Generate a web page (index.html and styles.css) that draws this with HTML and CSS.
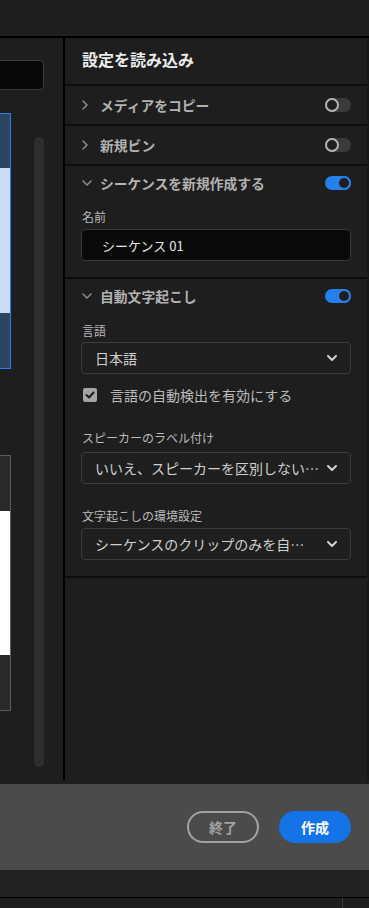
FILE: index.html
```html
<!DOCTYPE html>
<html lang="ja">
<head>
<meta charset="utf-8">
<title>設定を読み込み</title>
<link rel="stylesheet" href="styles.css">
</head>
<body>
<div class="app">
  <div class="topbar"></div>
  <div class="main">
    <div class="left">
      <div class="search"></div>
      <div class="lower">
        <div class="thumbs">
          <div class="thumb selected">
            <div class="band"></div>
            <div class="img"></div>
            <div class="band"></div>
          </div>
          <div class="thumb">
            <div class="band"></div>
            <div class="img"></div>
            <div class="band"></div>
          </div>
        </div>
        <div class="scroll"></div>
      </div>
    </div>
    <div class="divider"></div>
    <div class="panel">
      <div class="panel-head">設定を読み込み</div>

      <div class="row sep">
        <span class="chev"><svg width="6" height="10" viewBox="0 0 6 10"><path d="M1 1l4 4-4 4" fill="none" stroke="#8e8e8e" stroke-width="1.5" stroke-linecap="round" stroke-linejoin="round"/></svg></span>
        <span class="row-title">メディアをコピー</span>
        <span class="toggle"><span class="knob"></span></span>
      </div>

      <div class="row sep">
        <span class="chev"><svg width="6" height="10" viewBox="0 0 6 10"><path d="M1 1l4 4-4 4" fill="none" stroke="#8e8e8e" stroke-width="1.5" stroke-linecap="round" stroke-linejoin="round"/></svg></span>
        <span class="row-title">新規ビン</span>
        <span class="toggle"><span class="knob"></span></span>
      </div>

      <div class="section sep">
        <div class="row sec-head">
          <span class="chev"><svg width="10" height="6" viewBox="0 0 10 6"><path d="M1 1l4 4 4-4" fill="none" stroke="#8e8e8e" stroke-width="1.5" stroke-linecap="round" stroke-linejoin="round"/></svg></span>
          <span class="row-title">シーケンスを新規作成する</span>
          <span class="toggle on"><span class="knob"></span></span>
        </div>
        <div class="sec-body">
          <div class="label l-name">名前</div>
          <div class="textfield">シーケンス 01</div>
        </div>
      </div>

      <div class="section sep">
        <div class="row sec-head">
          <span class="chev"><svg width="10" height="6" viewBox="0 0 10 6"><path d="M1 1l4 4 4-4" fill="none" stroke="#8e8e8e" stroke-width="1.5" stroke-linecap="round" stroke-linejoin="round"/></svg></span>
          <span class="row-title">自動文字起こし</span>
          <span class="toggle on"><span class="knob"></span></span>
        </div>
        <div class="sec-body">
          <div class="label l-lang">言語</div>
          <div class="dropdown d-lang">
            <span class="dd-text">日本語</span>
            <svg class="dd-chev" width="10" height="6" viewBox="0 0 10 6"><path d="M1 1l4 4 4-4" fill="none" stroke="#d2d2d2" stroke-width="2" stroke-linecap="round" stroke-linejoin="round"/></svg>
          </div>
          <div class="check-row">
            <span class="checkbox"><svg width="10" height="8" viewBox="0 0 10 8"><path d="M1.5 4l2.5 2.5 4.5-5" fill="none" stroke="#1e1e1e" stroke-width="2" stroke-linecap="round" stroke-linejoin="round"/></svg></span>
            <span class="check-text">言語の自動検出を有効にする</span>
          </div>
          <div class="label l-spk">スピーカーのラベル付け</div>
          <div class="dropdown d-spk">
            <span class="dd-text">いいえ、スピーカーを区別しない…</span>
            <svg class="dd-chev" width="10" height="6" viewBox="0 0 10 6"><path d="M1 1l4 4 4-4" fill="none" stroke="#d2d2d2" stroke-width="2" stroke-linecap="round" stroke-linejoin="round"/></svg>
          </div>
          <div class="label l-pref">文字起こしの環境設定</div>
          <div class="dropdown d-pref">
            <span class="dd-text">シーケンスのクリップのみを自…</span>
            <svg class="dd-chev" width="10" height="6" viewBox="0 0 10 6"><path d="M1 1l4 4 4-4" fill="none" stroke="#d2d2d2" stroke-width="2" stroke-linecap="round" stroke-linejoin="round"/></svg>
          </div>
        </div>
      </div>
    </div>
  </div>
  <div class="gap"></div>
  <div class="footer">
    <button class="btn btn-cancel">終了</button>
    <button class="btn btn-create">作成</button>
  </div>
  <div class="statusbar">
    <div class="status-top"></div>
    <div class="status-bottom"><div class="status-tick"></div></div>
  </div>
</div>
</body>
</html>
```

FILE: styles.css
```css
* { box-sizing: border-box; }

html, body {
  margin: 0;
  padding: 0;
  background: #1e1e1e;
}

body {
  width: 369px;
  height: 908px;
  overflow: hidden;
  font-family: "Noto Sans CJK JP", "Noto Sans", sans-serif;
}

.app {
  display: flex;
  flex-direction: column;
  width: 369px;
  height: 908px;
}

.topbar {
  height: 38px;
  background: #1f1f1f;
  border-bottom: 2px solid #000;
  flex: none;
}

.main {
  display: flex;
  height: 742px;
  flex: none;
}

/* left column */
.left {
  width: 63px;
  flex: none;
  display: flex;
  flex-direction: column;
}

.search {
  margin-top: 22px;
  width: 44px;
  height: 30px;
  background: #080808;
  border: 1px solid #3a3a3a;
  border-left: none;
  border-radius: 0 4px 4px 0;
}

.lower {
  display: flex;
  margin-top: 23px;
}

.thumbs {
  width: 11px;
  display: flex;
  flex-direction: column;
  gap: 86px;
}

.thumb {
  height: 256px;
  border: 1px solid #5c5c5c;
  border-left: none;
  display: flex;
  flex-direction: column;
  background: #2a2a2a;
}

.thumb .band { height: 55px; }
.thumb .img { height: 144px; background: #ffffff; }

.thumb.selected {
  border-color: #2a7ee8;
  background: #2b4663;
}
.thumb.selected .band:first-child { height: 54px; }
.thumb.selected .img { height: 145px; background: #c6ddf5; }

.scroll {
  margin-left: 23px;
  margin-top: 24px;
  width: 10px;
  height: 630px;
  border-radius: 5px;
  background: #2e2e2e;
}

.divider {
  width: 2px;
  flex: none;
  background: #000;
}

/* right panel */
.panel {
  width: 304px;
  flex: none;
  background: #1e1e1e;
  border-right: 2px solid #161616;
}

.sep { border-bottom: 2px solid #0c0c0c; }

.panel-head {
  height: 48px;
  padding: 0 0 4px 17px;
  display: flex;
  align-items: center;
  color: #ececec;
  font-size: 16px;
  font-weight: 700;
  border-bottom: 2px solid #0c0c0c;
}

.row {
  height: 40px;
  display: flex;
  align-items: center;
  padding: 0 16px 0 17px;
}

.sec-head { height: 34px; }

.chev {
  width: 18px;
  flex: none;
  display: flex;
  align-items: center;
}

.row-title {
  flex: 1;
  color: #b2b2b2;
  font-size: 13.8px;
  font-weight: 700;
  white-space: nowrap;
}

.toggle {
  position: relative;
  width: 26px;
  height: 14px;
  border-radius: 7px;
  background: #3a3a3a;
  flex: none;
}

.knob {
  position: absolute;
  top: 0;
  left: 0;
  width: 14px;
  height: 14px;
  border-radius: 50%;
  border: 2px solid #b4b4b4;
  background: #1e1e1e;
}

.toggle.on { background: #2680eb; }
.toggle.on .knob {
  left: 12px;
  border-color: #2680eb;
  background: #1e1e1e;
}

.sec-body {
  padding: 0 16px 16px 16px;
  display: flex;
  flex-direction: column;
}

.label {
  color: #bababa;
  font-size: 12px;
  line-height: 16px;
  padding-left: 1px;
}

.l-name { margin-top: 9px; }
.l-lang { margin-top: 10px; }
.l-spk { margin-top: 25px; }
.l-pref { margin-top: 24px; }

.textfield {
  margin-top: 4px;
  height: 32px;
  background: #0a0a0a;
  border: 1px solid #393939;
  border-radius: 4px;
  display: flex;
  align-items: center;
  padding-left: 20px;
  color: #e6e6e6;
  font-size: 13px;
}

.dropdown {
  height: 32px;
  border: 1px solid #3b3b3b;
  border-radius: 4px;
  background: #1f1f1f;
  display: flex;
  align-items: center;
  padding: 0 13px 0 13px;
}

.d-lang { margin-top: 3px; }
.d-spk { margin-top: 6px; }
.d-pref { margin-top: 4px; }

.dd-text {
  flex: 1;
  color: #d0d0d0;
  font-size: 14px;
  white-space: nowrap;
  overflow: hidden;
}

.dd-chev { flex: none; margin-left: 8px; }

.check-row {
  margin-top: 11px;
  height: 20px;
  display: flex;
  align-items: center;
  padding-left: 2px;
}

.checkbox {
  width: 14px;
  height: 14px;
  border-radius: 2px;
  background: #a4a4a4;
  display: flex;
  align-items: center;
  justify-content: center;
  flex: none;
}

.check-text {
  margin-left: 13px;
  color: #bcbcbc;
  font-size: 14px;
  white-space: nowrap;
}

.gap { height: 4px; flex: none; }

/* footer */
.footer {
  height: 86px;
  flex: none;
  background: #4b4b4b;
  display: flex;
  align-items: center;
  justify-content: flex-end;
  gap: 20px;
  padding-right: 18px;
}

.btn {
  width: 72px;
  height: 32px;
  border-radius: 16px;
  font-family: "Noto Sans CJK JP", "Noto Sans", sans-serif;
  font-size: 14px;
  font-weight: 700;
  display: flex;
  align-items: center;
  justify-content: center;
  padding: 0;
  cursor: pointer;
}

.btn-cancel {
  background: transparent;
  border: 2px solid #a2a2a2;
  color: #a2a2a2;
}

.btn-create {
  background: #1473e6;
  border: none;
  color: #ffffff;
}

.statusbar {
  flex: 1;
  display: flex;
  flex-direction: column;
}

.status-top {
  height: 28px;
  background: #232323;
  border-bottom: 1px solid #000;
}

.status-bottom {
  flex: 1;
  background: #1e1e1e;
  display: flex;
  padding-left: 342px;
}

.status-tick {
  width: 1px;
  background: #3a3a3a;
}
```
